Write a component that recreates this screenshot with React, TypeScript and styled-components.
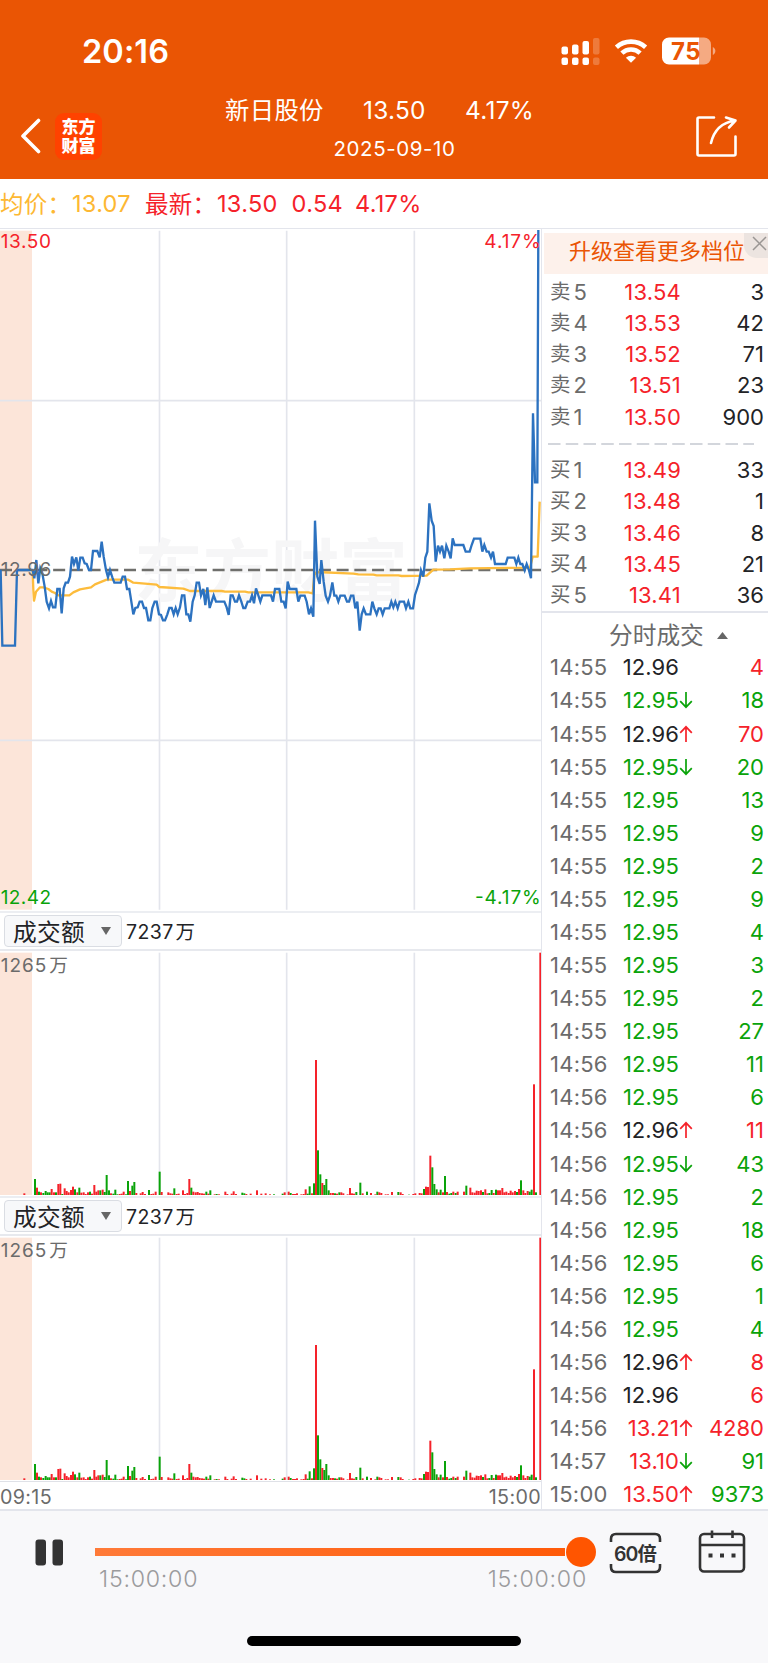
import React from "react";
import styled, { createGlobalStyle } from "styled-components";

const RED = "#f5222a";
const GREEN = "#0aa30a";
const INK = "#222326";
const GREY = "#6b6b6b";
const LINE = "#e3e5ec";
const FONT = `Inter, "Noto Sans CJK SC", sans-serif`;

const Global = createGlobalStyle`
  * { box-sizing: border-box; }
  body { margin: 0; background: #fff; font-family: ${FONT}; color: ${INK}; }
  svg { display: block; flex: none; }
  svg text { font-family: ${FONT}; }
`;

const Screen = styled.div`
  width: 768px;
  height: 1663px;
  display: flex;
  flex-direction: column;
  overflow: hidden;
`;

/* ---------- header ---------- */
const Header = styled.header`
  height: 179px;
  flex: none;
  background: #ea5504;
  color: #fff;
`;
const StatusBar = styled.div`
  height: 96px;
  display: flex;
  justify-content: space-between;
  align-items: center;
  padding: 7px 50px 0 82px;
`;
const Clock = styled.span`
  font-size: 32.5px;
  font-weight: 600;
  line-height: 40px;
  padding-top: 1px;
  letter-spacing: 0.1px;
`;
const StatusIcons = styled.div`
  display: flex;
  align-items: center;
`;
const Nav = styled.div`
  height: 83px;
  display: flex;
  padding: 0 30px 0 20px;
`;
const NavLeft = styled.div`
  width: 205px;
  display: flex;
  align-items: center;
  gap: 14px;
  padding-bottom: 4px;
  svg { margin-top: 1px; }
`;
const Logo = styled.div`
  width: 47px;
  height: 47px;
  margin-top: 2px;
  border-radius: 9px;
  background: #ff4200;
  display: flex;
  flex-direction: column;
  align-items: center;
  justify-content: center;
  font-size: 17px;
  font-weight: 900;
  line-height: 19px;
`;
const NavTitle = styled.div`
  width: 309px;
`;
const TitleRow = styled.div`
  display: flex;
  justify-content: space-between;
  height: 28px;
  line-height: 29px;
  font-size: 24.4px;
  letter-spacing: 0.3px;
`;
const DateText = styled.div`
  margin-top: 11px;
  text-align: center;
  line-height: 28px;
  font-size: 20.5px;
  letter-spacing: 0.6px;
  padding-left: 37px;
  padding-right: 7px;
`;
const Share = styled.div`
  margin-left: auto;
  padding-top: 19px;
`;

/* ---------- summary ---------- */
const Summary = styled.div`
  height: 50px;
  flex: none;
  display: flex;
  align-items: center;
  border-bottom: 1px solid ${LINE};
  font-size: 23.5px;
  letter-spacing: 0.3px;
  white-space: nowrap;
  padding-bottom: 1px;
`;
const Item = styled.span<{ $c: string; $gap: number; $w?: number }>`
  color: ${(p) => p.$c};
  margin-right: ${(p) => p.$gap}px;
  ${(p) => (p.$w ? `width: ${p.$w}px;` : "")}
`;

/* ---------- body ---------- */
const Body = styled.main`
  height: 1282px;
  flex: none;
  display: flex;
  border-bottom: 2px solid ${LINE};
`;
const Charts = styled.section`
  width: 542px;
  flex: none;
  border-right: 1px solid ${LINE};
  display: flex;
  flex-direction: column;
`;
const Picker = styled.div`
  height: 40px;
  flex: none;
  display: flex;
  align-items: center;
  gap: 4px;
  padding: 0 0 1px 4px;
  border-top: 2px solid #eceef2;
  border-bottom: 2px solid #e7e9ee;
`;
const Select = styled.div`
  width: 118px;
  height: 32px;
  display: flex;
  align-items: center;
  justify-content: space-between;
  padding: 0 10px 0 8px;
  border: 1px solid #dadde3;
  border-radius: 4px;
  background: #f7f8fa;
  font-size: 23.7px;
  letter-spacing: 0.3px;
`;
const Amount = styled.span`
  font-size: 19.5px;
  letter-spacing: 0.4px;
  display: flex;
  align-items: baseline;
  gap: 2px;
`;
const TimeAxis = styled.div`
  flex: 1;
  display: flex;
  justify-content: space-between;
  align-items: center;
  padding-top: 2px;
  border-top: 1px solid #dfe1e7;
  color: ${GREY};
  font-size: 19.7px;
  letter-spacing: 0.35px;
`;

const Side = styled.aside`
  flex: 1;
  display: flex;
  flex-direction: column;
`;
const Banner = styled.div`
  height: 41px;
  flex: none;
  margin: 4px 0 2px 2px;
  background: #fdf1eb;
  color: #ea5504;
  font-size: 22px;
  line-height: 37px;
  padding-left: 25px;
  position: relative;
  white-space: nowrap;
`;
const Close = styled.div`
  position: absolute;
  right: 0;
  top: 0;
  width: 24px;
  height: 25px;
  border-bottom-left-radius: 13px;
  background: #ece4e0;
  padding: 3px 0 0 8px;
`;
const BookRow = styled.div`
  height: 31.27px;
  flex: none;
  display: flex;
  align-items: center;
  padding: 0 4px 0 8px;
  font-size: 22px;
`;
const Level = styled.span`
  width: 58px;
  color: ${GREY};
  display: flex;
  align-items: center;
  gap: 3px;
`;
const SideMark = styled.span`
  font-size: 20.5px;
  line-height: 24px;
`;
const BookPrice = styled.span`
  width: 73px;
  text-align: right;
  color: ${RED};
  letter-spacing: 0.2px;
`;
const Qty = styled.span<{ $c?: string }>`
  margin-left: auto;
  color: ${(p) => p.$c || INK};
`;
const Divider = styled.div`
  height: 22.2px;
  flex: none;
  display: flex;
  align-items: center;
  padding: 1px 0 0 6px;
`;
const TradesHead = styled.div`
  height: 40px;
  flex: none;
  border-top: 2px solid ${LINE};
  display: flex;
  align-items: center;
  gap: 13px;
  padding: 8px 0 0 67px;
  color: ${GREY};
  font-size: 23.7px;
  line-height: 30px;
`;
const TradeRow = styled.div`
  height: 33.09px;
  flex: none;
  display: flex;
  align-items: center;
  padding: 0 4px 0 8px;
  font-size: 22px;
`;
const Time = styled.span`
  width: 72px;
  color: ${GREY};
  letter-spacing: 0.25px;
`;
const Price = styled.span<{ $c: string }>`
  width: 57px;
  text-align: right;
  letter-spacing: 0.1px;
  color: ${(p) => p.$c};
`;

/* ---------- player ---------- */
const Footer = styled.footer`
  flex: 1;
  background: #f8f8fa;
  display: flex;
  flex-direction: column;
  align-items: center;
`;
const Player = styled.div`
  width: 100%;
  height: 121px;
  display: flex;
  padding: 18px 20px 0 35px;
`;
const Seek = styled.div`
  width: 502px;
  margin-left: 31px;
  padding-top: 8px;
`;
const Track = styled.div`
  height: 30px;
  display: flex;
  align-items: center;
`;
const Fill = styled.div`
  height: 8px;
  width: 470px;
  background: linear-gradient(90deg, #ff7a38, #ff5a08);
`;
const Knob = styled.div`
  width: 30px;
  height: 30px;
  margin-left: 1px;
  border-radius: 50%;
  background: #ff5500;
`;
const SeekTimes = styled.div`
  display: flex;
  justify-content: space-between;
  padding: 0 10px 0 4px;
  margin-top: -2px;
  color: #9b9b9d;
  font-size: 23.2px;
  line-height: 28px;
  letter-spacing: 0.75px;
  font-weight: 300;
`;
const PauseWrap = styled.div`
  padding-top: 10px;
`;
const SpeedWrap = styled.div`
  margin: 3px 0 0 12px;
`;
const CalendarWrap = styled.div`
  margin: 1px 0 0 36px;
`;
const HomeBar = styled.div`
  width: 274px;
  height: 10px;
  margin-top: 4px;
  border-radius: 5px;
  background: #000;
`;

/* Chart geometry is kept at three units per pixel. */
const PRICE_A = "0,210 2,212 7,437 45,437 51,210 98,210 103,235 109,180 115,250 121,205 127,220 134,260 140,305 147,325 153,303 159,322 166,322 172,267 179,267 185,340 191,265 197,248 204,248 210,230 216,170 222,192 229,172 235,212 241,173 248,173 254,190 260,192 267,210 273,210 279,153 292,153 299,172 305,125 311,170 318,210 324,232 330,210 337,232 343,248 362,248 368,230 375,230 381,267 388,267 394,305 400,343 406,324 413,322 419,305 426,305 432,324 438,324 445,361 451,361 457,324 464,305 470,305 477,343 483,345 489,361 495,361 502,343 508,324 515,324 521,343 527,324 533,343 540,322 546,286 553,286 559,343 565,343 571,365 578,305 584,286 590,248 597,248 603,286 610,267 616,315 622,262 629,324 635,305 641,286 648,305 673,305 680,322 686,345 692,286 698,286 705,305 711,305 717,286 724,305 730,324 736,324 743,305 750,305 756,286 762,310 768,265 775,286 781,305 787,286 813,286";
const PRICE_B = "9,605 15,567 28,567 34,605 41,605 47,625 53,545 59,567 79,567 85,605 91,587 104,587 110,605 117,643 123,625 130,650 135,362 142,530 149,552 154,480 161,545 167,587 174,605 180,587 187,547 193,587 199,587 205,605 211,587 224,587 231,605 237,605 243,587 250,587 256,625 262,605 269,692 275,643 281,625 288,643 301,643 307,605 313,625 320,643 326,625 332,625 338,643 344,625 358,625 364,605 370,622 376,605 383,625 389,605 402,605 408,625 415,605 421,625 429,625 435,585 441,567 447,548 453,511 460,530 466,473 472,455 478,310 485,362 491,378 497,485 504,437 510,455 516,437 523,475 529,437 536,455 542,475 548,415 554,435 580,435 587,455 599,455 605,435 612,416 631,416 637,455 643,435 650,455 656,455 663,473 669,455 675,492 707,492 713,473 733,473 739,492 745,473 751,492 757,492 764,511 770,492 777,511 783,535 789,40 795,247 802,247 805,-510";
const AVG_A = "98,212 100,270 102,302 108,275 120,262 130,262 145,267 155,275 165,279 175,286 208,286 220,277 240,268 273,262 285,253 320,239 385,239 400,248 470,254 478,261 550,266 570,273 665,273 675,275 735,275 745,277 810,277";
const AVG_B = "0,577 115,577 128,580 133,525 140,516 250,521 265,523 310,524 320,526 385,526 395,528 470,527 480,518 490,509 540,508 600,505 780,503 788,470 803,470 809,305";

const shift = (s: string, dx: number, dy: number) =>
  s.split(" ").map((p) => {
    const [x, y] = p.split(",").map(Number);
    return `${x + dx},${y + dy}`;
  }).join(" ");
const PRICE = shift(PRICE_A, 0, 1500) + " " + shift(PRICE_B, 810, 1200);
const AVG = shift(AVG_A, 0, 1500) + " " + shift(AVG_B, 810, 1200);

const BARS_A = "r73,5 g105,48 r111,22 g117,10 r123,8 g130,6 g137,12 g143,8 g149,8 r155,18 r162,8 g168,8 r175,33 r181,34 g187,3 r194,20 r200,12 r206,8 r213,15 r219,25 g225,17 r232,8 g238,22 r244,7 r251,8 r257,3 r264,8 g270,10 r276,4 r283,30 r289,10 r295,14 g301,14 r308,16 g314,9 g320,60 g327,14 r333,5 g340,4 g346,16 g352,2 r359,3 r365,4 r371,10 g378,2 g384,42 r390,12 g397,28 g403,39 r409,6 r422,5 r428,9 r435,3 g447,15 r454,3 r460,4 r467,10 g479,70 r485,9 r505,8 r511,5 r517,4 g523,20 r530,3 r536,4 r549,14 r555,3 r562,6 r568,48 g574,22 r580,10 r587,8 r593,9 r599,6 r606,5 r612,4 g619,10 r625,4 g631,14 r644,2 g650,3 r657,2 r676,10 r682,3 r695,4 r701,11 r708,3 g727,7 g733,5 r739,3 r752,4 r771,14 r784,4 r797,5 r810,2 g822,2";
const BARS_B = "g38,4 r44,8 r56,10 g62,6 r69,3 r75,3 r81,5 r94,2 r101,3 r107,17 g113,4 g119,26 r126,5 g132,35 r138,405 g144,134 g151,62 r157,36 g163,30 g169,48 g176,14 r182,6 r189,6 g195,5 r201,4 g208,8 r214,8 r220,5 r233,2 r240,21 r246,5 r252,4 g259,9 g271,37 r278,5 g291,10 r303,6 r316,2 g322,10 r328,8 r334,6 r347,2 r354,2 r366,9 g385,9 r392,8 r398,3 g417,1 r430,3 r436,5 r449,6 r455,5 g462,18 r468,25 r474,24 r481,118 g487,83 g493,33 g500,17 r506,8 g512,16 r519,8 g525,57 r531,9 g538,4 g544,6 r550,10 g557,6 r563,10 r582,10 g589,28 r601,22 r607,8 r614,7 r620,13 r626,12 r633,14 g639,9 r646,17 r652,5 g658,6 g665,15 r671,6 g678,16 r684,14 r690,14 r697,21 r703,8 r709,10 r716,6 r722,13 r728,8 r735,12 g741,9 r747,18 g753,44 r760,14 r766,6 r773,12 g779,10 g785,16 r792,332 g798,8 r811,727";
const parseBars = (s: string, dx: number) =>
  s.split(" ").map((b) => {
    const [x, h] = b.slice(1).split(",").map(Number);
    return { c: b[0] === "r" ? RED : GREEN, x: x + dx, h };
  });
const BARS = [...parseBars(BARS_A, 0), ...parseBars(BARS_B, 810)].filter((b, i, all) => i === 0 || all[i - 1].x !== b.x);
const GRID_X = [478.5, 860, 1243];

const PriceChart = () => (
  <svg width="541" height="682" viewBox="0 687 1623 2046">
    <rect x="0" y="692" width="96" height="2037" fill="#fce5d9" />
    {GRID_X.map((x) => <path key={x} d={`M${x} 692V2729`} stroke={LINE} strokeWidth="5" />)}
    <path d="M0 1202H1623M0 2221H1623" stroke={LINE} strokeWidth="5" />
    <text x="403" y="1787" fontSize="205" fontWeight="700" fill="#f6f6f7" textLength="820">东方财富</text>
    <path d="M0 1710H1623" stroke="#6f6f6c" strokeWidth="7" strokeDasharray="36 17.15" />
    <polyline points={AVG} fill="none" stroke="#fdbc3c" strokeWidth="7" strokeLinejoin="round" />
    <polyline points={PRICE} fill="none" stroke="#2c72c0" strokeWidth="7" />
    <g fontSize="57">
      <text x="2" y="744" fill={RED} textLength="151">13.50</text>
      <text x="2" y="1729" fill="#6b6b6b" textLength="152">12.96</text>
      <text x="2" y="2712" fill={GREEN} textLength="151">12.42</text>
      <text x="1453" y="744" fill={RED} textLength="169">4.17%</text>
      <text x="1425" y="2712" fill={GREEN} textLength="197">-4.17%</text>
    </g>
  </svg>
);

const VolumeChart = () => (
  <svg width="541" height="245" viewBox="0 0 1623 735">
    <rect x="0" y="5" width="96" height="727" fill="#fce5d9" />
    {GRID_X.map((x) => <path key={x} d={`M${x} 5V732`} stroke={LINE} strokeWidth="5" />)}
    {BARS.map((b) => <rect key={b.x} x={b.x - 3} y={732 - b.h} width="6" height={b.h} fill={b.c} />)}
    <text x="2" y="63" fontSize="57" fill={GREY} textLength="137">1265</text>
    <text x="148" y="63" fontSize="56" fill={GREY}>万</text>
  </svg>
);

const PickerBar = () => (
  <Picker>
    <Select>
      成交额
      <svg width="10" height="10" viewBox="0 0 10 10"><path d="M0 1H10L5 9Z" fill="#666" /></svg>
    </Select>
    <Amount><span>7237</span><span>万</span></Amount>
  </Picker>
);

const ASKS = [["5", "13.54", "3"], ["4", "13.53", "42"], ["3", "13.52", "71"], ["2", "13.51", "23"], ["1", "13.50", "900"]];
const BIDS = [["1", "13.49", "33"], ["2", "13.48", "1"], ["3", "13.46", "8"], ["4", "13.45", "21"], ["5", "13.41", "36"]];

const Book = ({ side, rows }: { side: string; rows: string[][] }) => (
  <>
    {rows.map(([n, p, q]) => (
      <BookRow key={n}>
        <Level><SideMark>{side}</SideMark>{n}</Level>
        <BookPrice>{p}</BookPrice>
        <Qty>{q}</Qty>
      </BookRow>
    ))}
  </>
);

type Trade = [string, string, "" | "u" | "d", string, string];
const TRADES: Trade[] = [
  ["14:55", "12.96", "", "4", RED], ["14:55", "12.95", "d", "18", GREEN], ["14:55", "12.96", "u", "70", RED],
  ["14:55", "12.95", "d", "20", GREEN], ["14:55", "12.95", "", "13", GREEN], ["14:55", "12.95", "", "9", GREEN],
  ["14:55", "12.95", "", "2", GREEN], ["14:55", "12.95", "", "9", GREEN], ["14:55", "12.95", "", "4", GREEN],
  ["14:55", "12.95", "", "3", GREEN], ["14:55", "12.95", "", "2", GREEN], ["14:55", "12.95", "", "27", GREEN],
  ["14:56", "12.95", "", "11", GREEN], ["14:56", "12.95", "", "6", GREEN], ["14:56", "12.96", "u", "11", RED],
  ["14:56", "12.95", "d", "43", GREEN], ["14:56", "12.95", "", "2", GREEN], ["14:56", "12.95", "", "18", GREEN],
  ["14:56", "12.95", "", "6", GREEN], ["14:56", "12.95", "", "1", GREEN], ["14:56", "12.95", "", "4", GREEN],
  ["14:56", "12.96", "u", "8", RED], ["14:56", "12.96", "", "6", RED], ["14:56", "13.21", "u", "4280", RED],
  ["14:57", "13.10", "d", "91", GREEN], ["15:00", "13.50", "u", "9373", GREEN],
];
const priceColor = (p: string) => (p === "12.96" ? INK : p === "12.95" ? GREEN : RED);

const Arrow = ({ dir }: { dir: "u" | "d" }) => (
  <svg width="14" height="18" viewBox="0 0 14 18">
    <path
      d={dir === "u" ? "M7 17V2M1.2 7.8L7 1.8L12.8 7.8" : "M7 1V16M1.2 10.2L7 16.2L12.8 10.2"}
      fill="none" stroke={dir === "u" ? RED : GREEN} strokeWidth="1.7"
    />
  </svg>
);

export default function App() {
  return (
    <Screen>
      <Global />
      <Header>
        <StatusBar>
          <Clock>20:16</Clock>
          <StatusIcons>
            <svg width="157" height="30" viewBox="0 0 157 30">
              <g fill="#fff">
                <rect x="0.5" y="9.5" width="6.5" height="8" rx="2" />
                <rect x="11" y="7.5" width="6.5" height="10" rx="2" />
                <rect x="21.5" y="4" width="6.5" height="13.5" rx="2" />
                <rect x="0.5" y="20.5" width="6.5" height="7.5" rx="2" />
                <rect x="11" y="20.5" width="6.5" height="7.5" rx="2" />
                <rect x="21.5" y="20.5" width="6.5" height="7.5" rx="2" />
                <g opacity="0.22">
                  <rect x="32" y="1" width="6.5" height="16.5" rx="2" />
                  <rect x="32" y="20.5" width="6.5" height="7.5" rx="2" />
                </g>
              </g>
              <g fill="none" stroke="#fff" strokeWidth="4.6">
                <path d="M55.4 10.3a21.5 21.5 0 0 1 29.2 0" />
                <path d="M60.9 16.1a13.3 13.3 0 0 1 18.2 0" />
              </g>
              <path d="M64.9 20.8a7.6 7.6 0 0 1 10.2 0L70 25.8Z" fill="#fff" />
              <path d="M108 0.5H138V27.5H108a7 7 0 0 1-7-7V7.5a7 7 0 0 1 7-7Z" fill="#fff" />
              <path d="M138 0.5H143a7 7 0 0 1 7 7V20.5a7 7 0 0 1-7 7H138Z" fill="#fff" opacity="0.5" />
              <path d="M151.8 10c3.4 1.6 3.4 6.4 0 8Z" fill="#fff" opacity="0.5" />
              <text x="110" y="22.8" fontSize="24" fontWeight="700" fill="#ea5504" textLength="29.5">75</text>
            </svg>
          </StatusIcons>
        </StatusBar>
        <Nav>
          <NavLeft>
            <svg width="21" height="36" viewBox="0 0 21 36">
              <path d="M18.5 2.5L3 18L18.5 33.5" fill="none" stroke="#fff" strokeWidth="3.6" strokeLinecap="round" strokeLinejoin="round" />
            </svg>
            <Logo><span>东方</span><span>财富</span></Logo>
          </NavLeft>
          <NavTitle>
            <TitleRow><span>新日股份</span><span>13.50</span><span>4.17%</span></TitleRow>
            <DateText>2025-09-10</DateText>
          </NavTitle>
          <Share>
            <svg width="43" height="43" viewBox="0 0 43 43">
              <g fill="none" stroke="#fff" strokeWidth="2.6" strokeLinecap="round" strokeLinejoin="round">
                <path d="M19 2.5H4Q2.5 2.5 2.5 4V39Q2.5 40.5 4 40.5H39Q40.5 40.5 40.5 39V21.5" />
                <path d="M16 28Q20.5 8.5 40 5.5M31 2.5L40.5 5.5L34 12.5" />
              </g>
            </svg>
          </Share>
        </Nav>
      </Header>

      <Summary>
        <Item $c="#fdb833" $gap={0} $w={72}>均价：</Item>
        <Item $c="#fdb833" $gap={0} $w={73}>13.07</Item>
        <Item $c={RED} $gap={0} $w={72}>最新：</Item>
        <Item $c={RED} $gap={14}>13.50</Item>
        <Item $c={RED} $gap={12}>0.54</Item>
        <Item $c={RED} $gap={0}>4.17%</Item>
      </Summary>

      <Body>
        <Charts>
          <PriceChart />
          <PickerBar />
          <VolumeChart />
          <PickerBar />
          <VolumeChart />
          <TimeAxis><span>09:15</span><span>15:00</span></TimeAxis>
        </Charts>
        <Side>
          <Banner>
            升级查看更多档位
            <Close>
              <svg width="15" height="15" viewBox="0 0 15 15"><path d="M1 1L14 14M14 1L1 14" stroke="#9a9694" strokeWidth="1.5" /></svg>
            </Close>
          </Banner>
          <Book side="卖" rows={ASKS} />
          <Divider>
            <svg width="206" height="2"><path d="M0 1H206" stroke="#d3d6dc" strokeWidth="2" strokeDasharray="12.5 5.25" /></svg>
          </Divider>
          <Book side="买" rows={BIDS} />
          <TradesHead>
            分时成交
            <svg width="11" height="7" viewBox="0 0 11 7"><path d="M0 7L5.5 0L11 7Z" fill="#666" /></svg>
          </TradesHead>
          {TRADES.map(([t, p, dir, q, c], i) => (
            <TradeRow key={i}>
              <Time>{t}</Time>
              <Price $c={priceColor(p)}>{p}</Price>
              {dir && <Arrow dir={dir} />}
              <Qty $c={c}>{q}</Qty>
            </TradeRow>
          ))}
        </Side>
      </Body>

      <Footer>
        <Player>
          <PauseWrap>
            <svg width="29" height="27" viewBox="0 0 29 27">
              <rect x="0.5" y="0.5" width="10.5" height="26" rx="3" fill="#333" />
              <rect x="17.5" y="0.5" width="10.5" height="26" rx="3" fill="#333" />
            </svg>
          </PauseWrap>
          <Seek>
            <Track><Fill /><Knob /></Track>
            <SeekTimes><span>15:00:00</span><span>15:00:00</span></SeekTimes>
          </Seek>
          <SpeedWrap>
            <svg width="53" height="42" viewBox="0 0 53 42">
              <path d="M2 10V7Q2 2 7 2H46Q51 2 51 7V10M2 32V35Q2 40 7 40H46Q51 40 51 35V32" fill="none" stroke="#333" strokeWidth="2.6" />
              <text x="5" y="28.5" fontSize="19.5" fontWeight="600" fill="#333" textLength="43">60倍</text>
            </svg>
          </SpeedWrap>
          <CalendarWrap>
            <svg width="48" height="44" viewBox="0 0 48 44">
              <g fill="none" stroke="#333" strokeWidth="2.6">
                <rect x="2" y="4" width="44" height="37.5" rx="4" />
                <path d="M2 15H46M14 0.5V8M34.5 0.5V8" />
              </g>
              <path d="M10.5 23.5h4v4h-4zM22 23.5h4v4h-4zM33.5 23.5h4v4h-4z" fill="#333" />
            </svg>
          </CalendarWrap>
        </Player>
        <HomeBar />
      </Footer>
    </Screen>
  );
}
